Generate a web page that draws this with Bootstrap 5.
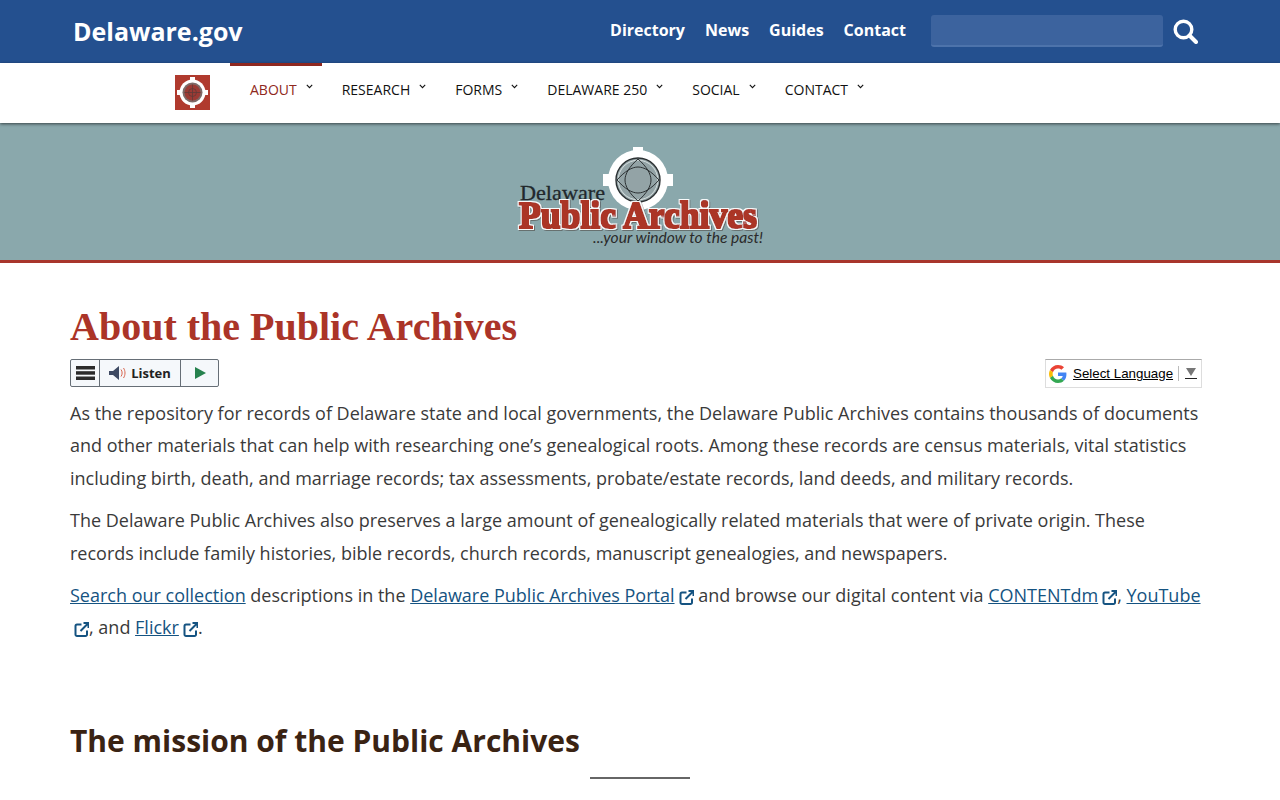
<!DOCTYPE html>
<html lang="en">
<head>
    <meta charset="UTF-8">
    <meta name="viewport" content="width=device-width, initial-scale=1.0">
    <title>About the Public Archives</title>
    <link href="https://cdn.jsdelivr.net/npm/bootstrap@5.3.0/dist/css/bootstrap.min.css" rel="stylesheet">
    <style>
        body { font-family: "Open Sans", sans-serif; font-size: 18px; line-height: 32.4px; color: #3a3a3a; }
        /* top state bar */
        .state-bar { height: 63px; background: #24508f; padding: 0 82px 0 73px; }
        .state-name { font-size: 25px; font-weight: 700; color: #fff; line-height: 1; text-decoration: none; }
        .state-links { gap: 20px; margin: 0 25px 3px 0; }
        .state-links a { color: #fff; font-size: 16px; font-weight: 700; text-decoration: none; line-height: 1; }
        .state-search { width: 232px; height: 32px; margin: 0 10px 2px 0; background: #3c639e; border: 0; border-bottom: 2px solid #4d73ab; border-radius: 3px; }
        /* agency nav */
        .agency-nav { height: 60px; background: #fff; padding-left: 175px; position: relative; box-shadow: 0 1px 3px rgba(0,0,0,.6); }
        .agency-mark { width: 35px; height: 35px; margin: 12px 20px 0 0; }
        .agency-item { padding: 0 9px 0 20px; border-top: 3px solid transparent; height: 54px; font-size: 14px; line-height: 47px; color: #111; text-decoration: none; white-space: nowrap; }
        .agency-item.is-current { border-top-color: #8f2820; color: #8f2820; }
        .agency-item svg { margin: 0 0 10px 9px; vertical-align: middle; color: #111; }
        /* hero */
        .hero-band { height: 140px; background: #8aa8ac; border-bottom: 3px solid #a8352c; padding-top: 20px; }
        /* page */
        .page-body { padding: 44px 70px 0; }
        .page-title { font-family: "Liberation Serif", serif; font-weight: 700; font-size: 40px; line-height: 40px; color: #ab3428; margin: 0 0 12px; }
        .listen-box { height: 28px; border: 1px solid #666e76; border-radius: 2px; background: #f5f8fb; color: #222; font-size: 13px; font-weight: 700; line-height: 26px; }
        .listen-part { height: 100%; border-right: 1px solid #666e76; }
        .translate-box { width: 157px; height: 29px; margin-right: 8px; border: 1px solid #ddd; border-top-color: #aaa; font-family: "Liberation Sans", sans-serif; font-size: 13.33px; line-height: 27px; color: #000; padding-left: 3px; }
        .translate-box u { margin-left: 6px; }
        .translate-sep { width: 1px; height: 15px; background: #bbb; margin: 0 6px 0 5px; }
        .copy-block { margin-top: 9px; }
        .copy-block p { margin-bottom: 10px; }
        .copy-block a { color: #155381; }
        .ext-mark { margin-left: 4px; vertical-align: -3px; }
        .section-title { font-size: 30px; font-weight: 700; line-height: 36px; color: #3a2313; margin: 79px 0 18px; }
        .section-rule { width: 100px; height: 2px; background: #666; margin: 0 auto; }
    </style>
</head>
<body>
    <header class="state-bar d-flex align-items-center">
        <a class="state-name me-auto" href="#">Delaware.gov</a>
        <nav class="state-links d-flex">
            <a href="#">Directory</a>
            <a href="#">News</a>
            <a href="#">Guides</a>
            <a href="#">Contact</a>
        </nav>
        <div class="state-search"></div>
        <svg width="25" height="25" viewBox="0 0 25 25" fill="none" stroke="#fff"><circle cx="10.500" cy="10.500" r="8.300" stroke-width="3.400"/><path d="M16.500 16.500 23 23" stroke-width="4" stroke-linecap="round"/></svg>
    </header>

    <nav class="agency-nav d-flex">
        <svg class="agency-mark" viewBox="0 0 35 35">
            <rect width="35" height="35" fill="#b03a2e"/>
            <circle cx="17.500" cy="17.500" r="13" fill="#fff"/>
            <rect x="15" y="2" width="5" height="31" fill="#fff"/>
            <rect x="2" y="15" width="31" height="5" fill="#fff"/>
            <circle cx="17.500" cy="17.500" r="10" fill="#7d6a68"/>
            <circle cx="17.500" cy="17.500" r="8" fill="#9c3a34"/>
            <g fill="none" stroke="#5f3a38" stroke-width=".8">
                <circle cx="17.500" cy="17.500" r="4"/>
                <path d="M17.500 9.500v16M9.500 17.500h16"/>
            </g>
        </svg>
        <a class="agency-item is-current" href="#">ABOUT<svg width="7" height="5" viewBox="0 0 7 5" fill="none" stroke="currentColor" stroke-width="1.100"><path d="M.8.8 3.500 3.600 6.200.8"/></svg></a>
        <a class="agency-item" href="#">RESEARCH<svg width="7" height="5" viewBox="0 0 7 5" fill="none" stroke="currentColor" stroke-width="1.100"><path d="M.8.8 3.500 3.600 6.200.8"/></svg></a>
        <a class="agency-item" href="#">FORMS<svg width="7" height="5" viewBox="0 0 7 5" fill="none" stroke="currentColor" stroke-width="1.100"><path d="M.8.8 3.500 3.600 6.200.8"/></svg></a>
        <a class="agency-item" href="#">DELAWARE 250<svg width="7" height="5" viewBox="0 0 7 5" fill="none" stroke="currentColor" stroke-width="1.100"><path d="M.8.8 3.500 3.600 6.200.8"/></svg></a>
        <a class="agency-item" href="#">SOCIAL<svg width="7" height="5" viewBox="0 0 7 5" fill="none" stroke="currentColor" stroke-width="1.100"><path d="M.8.8 3.500 3.600 6.200.8"/></svg></a>
        <a class="agency-item" href="#">CONTACT<svg width="7" height="5" viewBox="0 0 7 5" fill="none" stroke="currentColor" stroke-width="1.100"><path d="M.8.8 3.500 3.600 6.200.8"/></svg></a>
    </nav>

    <div class="hero-band d-flex justify-content-center">
        <svg width="250" height="110" viewBox="0 0 250 110">
            <defs>
                <filter id="fatType" x="-5%" y="-15%" width="110%" height="130%">
                    <feMorphology in="SourceGraphic" operator="dilate" radius=".7" result="fat"/>
                    <feMorphology in="SourceAlpha" operator="dilate" radius="1.500" result="halo"/>
                    <feFlood flood-color="#fff" flood-opacity=".95"/>
                    <feComposite in2="halo" operator="in" result="white"/>
                    <feOffset in="halo" dx=".8" dy="1" result="dropped"/>
                    <feFlood flood-color="#3a2a28" flood-opacity=".45"/>
                    <feComposite in2="dropped" operator="in" result="shade"/>
                    <feMerge>
                        <feMergeNode in="shade"/>
                        <feMergeNode in="white"/>
                        <feMergeNode in="fat"/>
                    </feMerge>
                </filter>
            </defs>
            <!-- window ring -->
            <rect x="118" y="4" width="10" height="10" fill="#fff"/>
            <rect x="88" y="31" width="12" height="12" fill="#fff"/>
            <rect x="146" y="31" width="12" height="12" fill="#fff"/>
            <circle cx="123" cy="37" r="30" fill="#fff"/>
            <circle cx="123" cy="37" r="22" fill="#93a3a6" stroke="#2c3133" stroke-width="1.400"/>
            <circle cx="123" cy="37" r="19.800" fill="none" stroke="#e6ecec" stroke-width=".8"/>
            <g fill="none" stroke="#2c3133" stroke-width="1">
                <path d="M123 16C114 24 110 31 110 37s4 13 13 21C132 50 136 43 136 37s-4-13-13-21Z"/>
                <path d="M102 37C110 28 117 24 123 24s13 4 21 13C136 46 129 50 123 50s-13-4-21-13Z"/>
            </g>
            <text x="5" y="57" font-family="Liberation Serif, serif" font-size="22" fill="#22282c" stroke="#22282c" stroke-width=".3" textLength="85" lengthAdjust="spacingAndGlyphs">Delaware</text>
            <text x="4" y="85" font-family="Liberation Serif, serif" font-size="37" font-weight="700" fill="#ab3428" filter="url(#fatType)" textLength="238" lengthAdjust="spacingAndGlyphs">Public Archives</text>
            <text x="78" y="100" font-family="Lato, sans-serif" font-size="15.500" font-style="italic" fill="#2a2a2a" textLength="170" lengthAdjust="spacingAndGlyphs">...your window to the past!</text>
        </svg>
    </div>

    <main class="page-body">
        <h1 class="page-title">About the Public Archives</h1>
        <div class="d-flex justify-content-between">
            <div class="listen-box d-inline-flex">
                <div class="listen-part d-flex align-items-center justify-content-center" style="width:29px">
                    <svg width="19" height="14" viewBox="0 0 19 14" fill="#2b2b2b"><rect width="19" height="3.500"/><rect y="5.200" width="19" height="3.500"/><rect y="10.500" width="19" height="3.500"/></svg>
                </div>
                <div class="listen-part d-flex align-items-center justify-content-center gap-1" style="width:81px">
                    <svg width="18" height="14" viewBox="0 0 18 14" fill="none"><path d="M0 5h4l6-5v14L4 9H0Z" fill="#3e4a63"/><path d="M12 3.500c1.500 2 1.500 5 0 7M14.500 2c2 3 2 7 0 10" stroke="#d8654f" stroke-width="1"/></svg>
                    <span>Listen</span>
                </div>
                <div class="d-flex align-items-center justify-content-center" style="width:37px">
                    <svg width="12" height="12" viewBox="0 0 12 12"><path d="M1 0 12 6 1 12Z" fill="#26824e"/></svg>
                </div>
            </div>
            <div class="translate-box d-flex align-items-center">
                <svg width="18" height="18" viewBox="0 0 48 48"><path fill="#ea4335" d="M24 9.500c3.500 0 6.700 1.300 9.200 3.400l6.800-6.800C35.900 2.400 30.400 0 24 0 14.600 0 6.500 5.400 2.600 13.200l7.900 6.200C12.400 13.700 17.700 9.500 24 9.500Z"/><path fill="#4285f4" d="M46.500 24.500c0-1.600-.2-3.100-.4-4.500H24v9h12.700c-.6 2.900-2.200 5.400-4.700 7.100l7.700 6c4.500-4.200 6.800-10.400 6.800-17.600Z"/><path fill="#fbbc05" d="M10.500 28.600c-.5-1.400-.8-3-.8-4.600s.3-3.200.8-4.600l-7.900-6.200C.9 16.500 0 20.100 0 24s.9 7.500 2.600 10.800l7.900-6.200Z"/><path fill="#34a853" d="M24 48c6.500 0 11.900-2.100 15.700-5.900l-7.700-6c-2.100 1.400-4.800 2.300-8 2.300-6.300 0-11.600-4.200-13.500-9.900l-7.900 6.200C6.500 42.600 14.600 48 24 48Z"/></svg>
                <u>Select Language</u>
                <span class="translate-sep"></span>
                <svg width="12" height="11" viewBox="0 0 12 11"><path d="M1 0h10L6 8Z" fill="#777"/><rect y="10" width="12" height="1" fill="#222"/></svg>
            </div>
        </div>

        <div class="copy-block">
            <p>As the repository for records of Delaware state and local governments, the Delaware Public Archives contains thousands of documents and other materials that can help with researching one’s genealogical roots. Among these records are census materials, vital statistics including birth, death, and marriage records; tax assessments, probate/estate records, land deeds, and military records.</p>
            <p>The Delaware Public Archives also preserves a large amount of genealogically related materials that were of private origin. These records include family histories, bible records, church records, manuscript genealogies, and newspapers.</p>
            <p><a href="#">Search our collection</a> descriptions in the <a href="#">Delaware Public Archives Portal</a><svg class="ext-mark" width="15" height="15" viewBox="-.5 0 15 15" fill="none" stroke="#155381" stroke-width="2"><path d="M7 2.500H2.500a1.500 1.500 0 0 0-1.500 1.500v8.500a1.500 1.500 0 0 0 1.500 1.500H11a1.500 1.500 0 0 0 1.500-1.500V8.500"/><path d="M6 9 13.500 1.500M9 1h5v5"/></svg> and browse our digital content via <a href="#">CONTENTdm</a><svg class="ext-mark" width="15" height="15" viewBox="-.5 0 15 15" fill="none" stroke="#155381" stroke-width="2"><path d="M7 2.500H2.500a1.500 1.500 0 0 0-1.500 1.500v8.500a1.500 1.500 0 0 0 1.500 1.500H11a1.500 1.500 0 0 0 1.500-1.500V8.500"/><path d="M6 9 13.500 1.500M9 1h5v5"/></svg>, <a href="#">YouTube</a> <svg class="ext-mark" width="15" height="15" viewBox="-.5 0 15 15" fill="none" stroke="#155381" stroke-width="2"><path d="M7 2.500H2.500a1.500 1.500 0 0 0-1.500 1.500v8.500a1.500 1.500 0 0 0 1.500 1.500H11a1.500 1.500 0 0 0 1.500-1.500V8.500"/><path d="M6 9 13.500 1.500M9 1h5v5"/></svg>, and <a href="#">Flickr</a><svg class="ext-mark" width="15" height="15" viewBox="-.5 0 15 15" fill="none" stroke="#155381" stroke-width="2"><path d="M7 2.500H2.500a1.500 1.500 0 0 0-1.500 1.500v8.500a1.500 1.500 0 0 0 1.500 1.500H11a1.500 1.500 0 0 0 1.500-1.500V8.500"/><path d="M6 9 13.500 1.500M9 1h5v5"/></svg>.</p>
        </div>

        <h2 class="section-title">The mission of the Public Archives</h2>
        <div class="section-rule"></div>
    </main>

    <script src="https://cdn.jsdelivr.net/npm/bootstrap@5.3.0/dist/js/bootstrap.bundle.min.js"></script>
</body>
</html>
